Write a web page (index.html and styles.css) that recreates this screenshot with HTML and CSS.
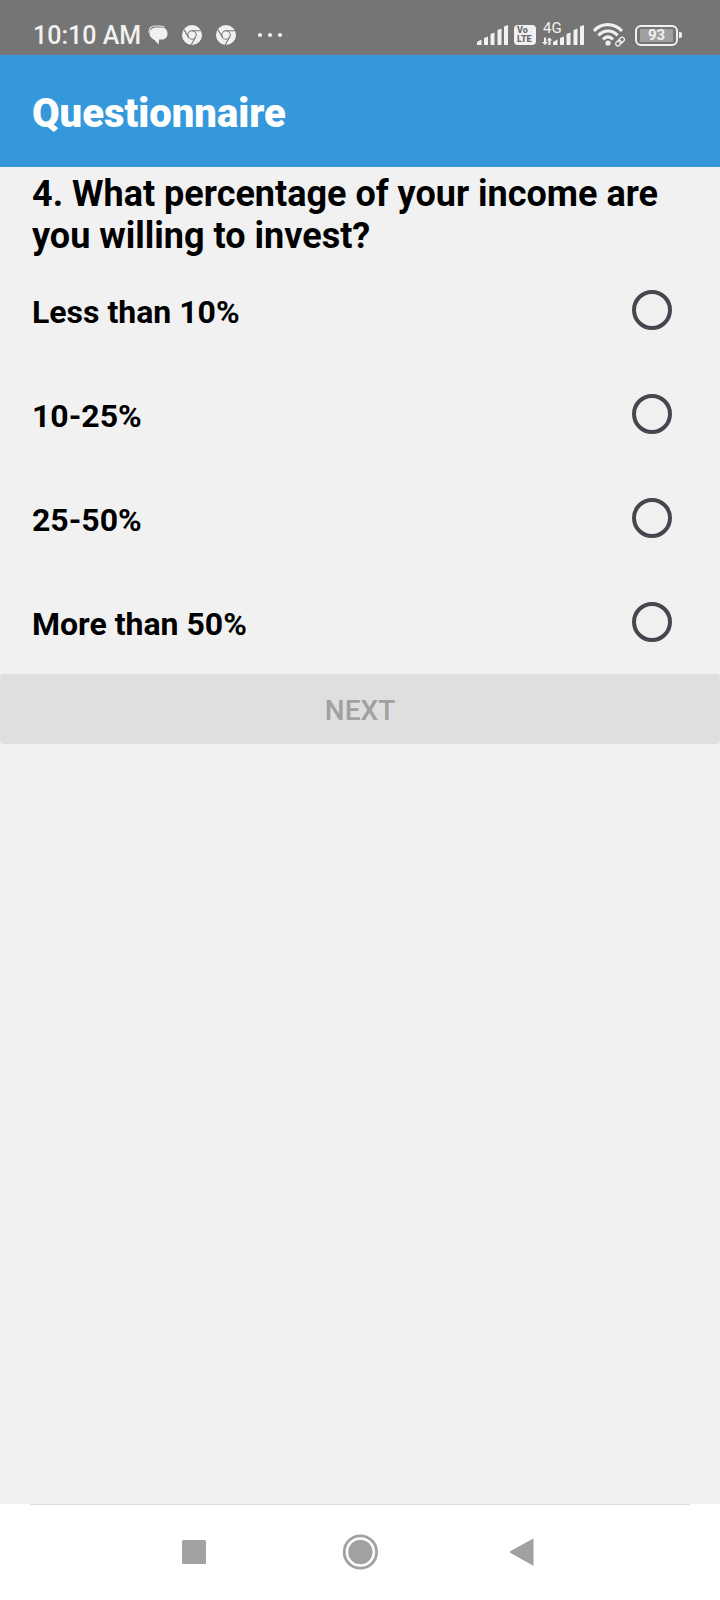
FILE: index.html
```html
<!DOCTYPE html>
<html lang="en">
<head>
<meta charset="utf-8">
<meta name="viewport" content="width=device-width, initial-scale=1">
<title>Questionnaire</title>
<link rel="stylesheet" href="styles.css">
</head>
<body>
<div class="screen">
  <div class="status">
    <div class="status-left">
      <span class="clock">10:10 AM</span>
      <svg class="messages" width="20" height="20" viewBox="0 0 20 20" aria-hidden="true">
        <path d="M.8 7.500C1 3.500 3 1 7 1h5c2 0 3.500.4 4.500 1.400" fill="none" stroke="#f1f1f1" stroke-width="1.200"/>
        <path d="M8 2.600h6c3.500 0 5.500 3 5.500 5.900 0 3.500-2 6-5.500 6h-2.800L10.500 19.500l-4-4.600C3.500 13.800 1.500 11 1.500 8.500c0-3.500 2.800-5.900 6.500-5.900z" fill="#f1f1f1"/>
      </svg>
      <svg class="browser" width="20" height="20" viewBox="0 0 20 20" aria-hidden="true">
        <circle cx="10" cy="10" r="10" fill="#f1f1f1"/>
        <g fill="none" stroke="#777" stroke-width="1.100"><circle cx="10" cy="10" r="4.200"/><path d="M10 5.800h8.800M6.400 12.100L2 4.600M13.600 12.100L9.200 19.800"/></g>
      </svg>
      <svg class="browser" width="20" height="20" viewBox="0 0 20 20" aria-hidden="true">
        <circle cx="10" cy="10" r="10" fill="#f1f1f1"/>
        <g fill="none" stroke="#777" stroke-width="1.100"><circle cx="10" cy="10" r="4.200"/><path d="M10 5.800h8.800M6.400 12.100L2 4.600M13.600 12.100L9.200 19.800"/></g>
      </svg>
      <svg class="more" width="26" height="20" viewBox="0 0 26 20" fill="#f1f1f1" aria-hidden="true">
        <circle cx="3" cy="10" r="2.100"/><circle cx="13" cy="10" r="2.100"/><circle cx="23" cy="10" r="2.100"/>
      </svg>
    </div>
    <div class="status-right">
      <svg width="31" height="20" viewBox="0 0 31 20" fill="#f1f1f1" aria-hidden="true">
        <path d="M0 20v-3l4.500-2.500V20zM7 20v-7l4-1.500V20zM13.500 20V9l4-1.500V20zM20.500 20V5l4-1.500V20zM27 20V1.500L31 0v20z"/>
      </svg>
      <span class="volte"><span>Vo</span><span>LTE</span></span>
      <span class="mobile">
        <span class="network">4G</span>
        <svg width="42" height="20" viewBox="0 0 42 20" fill="#f1f1f1" aria-hidden="true">
          <path d="M2 12.500h2V17h2l-3 3-3-3h2zM6.500 20v-4.500h-2l3-3 3 3h-2V20z"/>
          <path d="M11 20v-3l4.500-2.500V20zM18 20v-7l4-1.500V20zM24.500 20V9l4-1.500V20zM31.500 20V5l4-1.500V20zM38 20V1.500L42 0v20z"/>
        </svg>
      </span>
      <svg class="wifi" width="32" height="24" viewBox="0 0 32 24" fill="none" stroke="#f1f1f1" aria-hidden="true">
        <path d="M1 8C8-.5 21-.5 29 8M5.500 12.500c5-6 14-6 19 0M10 16.500c3-3.500 7-3.500 10 0" stroke-width="3.200"/>
        <circle cx="15" cy="20" r="2.600" fill="#f1f1f1" stroke="none"/>
        <g transform="rotate(-45 27 18.500)" stroke-width="1.300"><rect x="21.800" y="16.400" width="6.200" height="4.400" rx="2.200"/><rect x="26" y="16.400" width="6.200" height="4.400" rx="2.200"/></g>
      </svg>
      <span class="battery"><span class="charge">93</span></span>
      <span class="battery-tip"></span>
    </div>
  </div>
  <header class="app-bar"><h1 class="title">Questionnaire</h1></header>
  <main class="content">
    <form>
      <h2 class="question" id="question">4. What percentage of your income are you willing to invest?</h2>
      <div role="radiogroup" aria-labelledby="question">
        <label class="option"><span class="option-text">Less than 10%</span><input class="radio" type="radio" name="income" value="under-10"></label>
        <label class="option"><span class="option-text">10-25%</span><input class="radio" type="radio" name="income" value="10-25"></label>
        <label class="option"><span class="option-text">25-50%</span><input class="radio" type="radio" name="income" value="25-50"></label>
        <label class="option"><span class="option-text">More than 50%</span><input class="radio" type="radio" name="income" value="over-50"></label>
      </div>
      <button class="next" type="submit" disabled>NEXT</button>
    </form>
  </main>
  <nav class="system-nav">
    <button class="nav-button" type="button" aria-label="Recent apps">
      <svg width="36" height="36" viewBox="0 0 36 36" fill="#a1a1a1"><rect x="2" y="6" width="24" height="24" rx="1.500"/></svg>
    </button>
    <button class="nav-button" type="button" aria-label="Home">
      <svg width="36" height="36" viewBox="0 0 36 36" fill="#a1a1a1"><circle cx="18.400" cy="18" r="12.200"/><circle cx="18.400" cy="18" r="16.200" fill="none" stroke="#a1a1a1" stroke-width="2.800"/></svg>
    </button>
    <button class="nav-button" type="button" aria-label="Back">
      <svg width="36" height="36" viewBox="0 0 36 36" fill="#a1a1a1"><path d="M28 5.200a.8.800 0 0 1 1.500.6v24.600a.8.800 0 0 1-1.500.6L6.500 19a1.200 1.200 0 0 1 0-2z"/></svg>
    </button>
  </nav>
</div>
</body>
</html>
```
FILE: styles.css
```css
* {
  box-sizing: border-box;
}

body {
  margin: 0;
  background: #f1f1f1;
  color: #000;
  font-family: Roboto, "Liberation Sans", sans-serif;
}

.screen {
  display: flex;
  flex-direction: column;
  min-height: 100vh;
}

.status {
  display: flex;
  justify-content: space-between;
  padding: 20px 38px 5px 33px;
  background: #757575;
  color: #f1f1f1;
}

.status-left,
.status-right {
  display: flex;
  align-items: center;
  height: 30px;
}

.clock {
  padding-top: 2px;
  font-size: 25px;
  font-weight: 500;
  line-height: 30px;
}

.messages {
  margin-left: 7px;
}

.browser {
  margin-left: 14px;
}

.more {
  margin-left: 21px;
}

.volte {
  display: flex;
  flex-direction: column;
  align-items: flex-start;
  width: 22px;
  height: 20px;
  margin-left: 6px;
  padding: 1px 3px;
  border-radius: 4px;
  background: #f1f1f1;
  color: #666;
  font-size: 9px;
  font-weight: 800;
  line-height: 9px;
}

.mobile {
  position: relative;
  display: flex;
  margin-left: 6px;
}

.network {
  position: absolute;
  top: -5px;
  left: 1px;
  font-size: 15px;
  line-height: 16px;
}

.wifi {
  margin-left: 9px;
}

.battery {
  display: flex;
  width: 43px;
  height: 21px;
  margin-left: 10px;
  padding: 2px 3px;
  border: 2px solid #f1f1f1;
  border-radius: 6px;
}

.charge {
  flex: 1;
  background: #a0a0a0;
  font-size: 15px;
  font-weight: 700;
  line-height: 13px;
  text-align: center;
}

.battery-tip {
  width: 3px;
  height: 6px;
  margin-left: 1px;
  border-radius: 0 2px 2px 0;
  background: #f1f1f1;
}

.app-bar {
  display: flex;
  align-items: center;
  min-height: 112px;
  padding: 6px 32px 0;
  background: #3498db;
  color: #fff;
}

.title {
  margin: 0;
  font-size: 40px;
  font-weight: 900;
  line-height: 48px;
}

.content {
  flex: 1;
}

.question {
  margin: 0;
  padding: 6px 32px 1px;
  font-size: 36px;
  font-weight: 700;
  line-height: 42px;
}

.option {
  display: flex;
  align-items: center;
  justify-content: space-between;
  min-height: 104px;
  padding: 0 48px 0 32px;
}

.option-text {
  padding-top: 4px;
  font-size: 32px;
  font-weight: 700;
  line-height: 38px;
}

.radio {
  appearance: none;
  width: 40px;
  height: 40px;
  margin: 0;
  border: 4px solid #49454f;
  border-radius: 50%;
}

.radio:checked {
  background: #49454f;
  background-clip: content-box;
  padding: 6px;
}

.next {
  display: block;
  width: 100%;
  height: 70px;
  padding: 4px 0 0;
  border: 0;
  border-radius: 4px;
  background: #dfdfdf;
  color: #a1a1a1;
  font: 500 28px/34px Roboto, "Liberation Sans", sans-serif;
}

.system-nav {
  display: flex;
  justify-content: center;
  gap: 126px;
  height: 96px;
  background: linear-gradient(#dedede, #dedede) top / calc(100% - 60px) 1px no-repeat #fff;
}

.nav-button {
  display: flex;
  align-items: center;
  padding: 0;
  border: 0;
  background: none;
}
```
